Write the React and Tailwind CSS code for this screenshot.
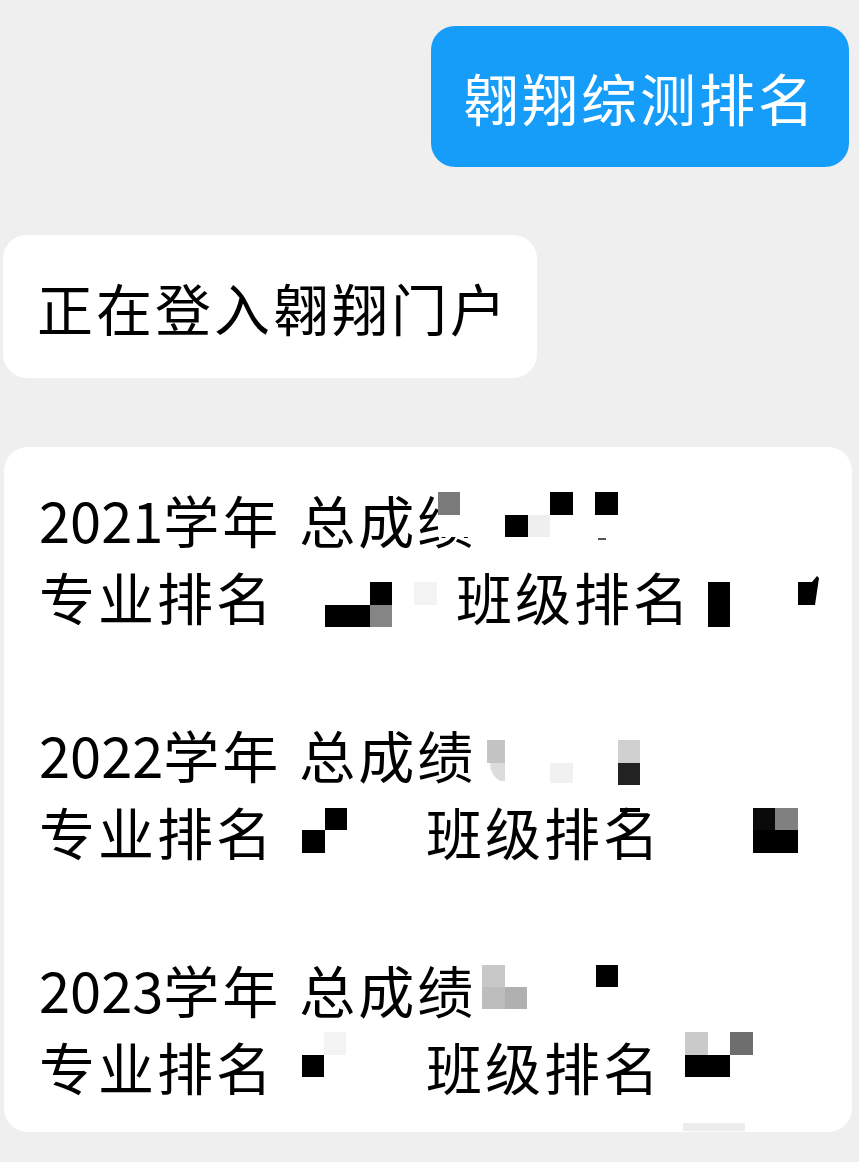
export default function App() {
  const font = { fontFamily: '"Noto Sans CJK SC", "Noto Sans", sans-serif' };
  const Year = ({ y }) => (
    <div className="flex items-center h-[77px] leading-[77px]">
      <span className="tracking-normal">{y}</span>
      <span className="tracking-[3px]">学年</span>
      <span className="tracking-[3px] ml-[18px]">总成绩</span>
    </div>
  );
  const Rank = ({ gap }) => (
    <div className="flex items-center h-[77px] leading-[77px]">
      <span className="tracking-[3px]">专业排名</span>
      <span className={`tracking-[3px] ${gap}`}>班级排名</span>
    </div>
  );
  return (
    <div
      className="relative w-[859px] h-[1162px] bg-[#efefef] flex flex-col overflow-hidden text-black"
      style={font}
    >
      <div className="self-end mr-[10px] mt-[26px] w-[418px] h-[141px] rounded-[24px] bg-[#169cf9] flex items-center justify-center text-white text-[56px] tracking-[3px]">
        翱翔综测排名
      </div>
      <div className="ml-[3px] mt-[68px] w-[534px] h-[143px] rounded-[24px] bg-white flex items-center pl-[34px] text-[56px] tracking-[3px]">
        正在登入翱翔门户
      </div>
      <div className="relative ml-[4px] mt-[69px] w-[848px] rounded-[24px] bg-white pt-[33px] pb-[28px] pl-[35px] text-[56px] flex flex-col">
        <div className="flex flex-col">
          <Year y="2021" />
          <Rank gap="ml-[181px]" />
        </div>
        <div className="flex flex-col mt-[81px]">
          <Year y="2022" />
          <Rank gap="ml-[151px]" />
        </div>
        <div className="flex flex-col mt-[81px]">
          <Year y="2023" />
          <Rank gap="ml-[151px]" />
        </div>
      </div>
      <svg
        className="absolute left-0 top-0 pointer-events-none"
        width="859"
        height="1162"
        viewBox="0 0 859 1162"
      >
        {/* 2021 score */}
        <rect x="438" y="492" width="50" height="45" fill="#ffffff" />
        <rect x="438" y="492" width="22" height="23" fill="#7a7a7a" />
        <rect x="505" y="515" width="23" height="22" fill="#000" />
        <rect x="528" y="515" width="22" height="22" fill="#efefef" />
        <rect x="550" y="492" width="23" height="23" fill="#000" />
        <rect x="595" y="492" width="23" height="23" fill="#000" />
        <rect x="598" y="538" width="8" height="2" fill="#555" />
        {/* 2021 ranks */}
        <rect x="325" y="605" width="45" height="22" fill="#000" />
        <rect x="370" y="582" width="22" height="23" fill="#000" />
        <rect x="370" y="605" width="22" height="22" fill="#858585" />
        <rect x="414" y="582" width="23" height="23" fill="#f3f3f3" />
        <rect x="708" y="582" width="22" height="45" fill="#000" />
        <polygon points="798,582 812,582 817,576 819,578 815,605 798,605" fill="#000" />
        {/* 2022 score */}
        <rect x="487" y="740" width="18" height="23" fill="#c4c4c4" />
        <path d="M490 763 H505 V781 H500 Q490 775 490 763 Z" fill="#dcdcdc" />
        <rect x="550" y="763" width="23" height="20" fill="#f1f1f1" />
        <rect x="618" y="740" width="22" height="23" fill="#d0d0d0" />
        <rect x="618" y="763" width="22" height="22" fill="#222" />
        <rect x="620" y="808" width="20" height="4" fill="#000" />
        {/* 2022 ranks */}
        <rect x="325" y="808" width="22" height="22" fill="#000" />
        <rect x="302" y="830" width="23" height="23" fill="#000" />
        <rect x="753" y="808" width="22" height="22" fill="#0a0a0a" />
        <rect x="775" y="808" width="23" height="22" fill="#808080" />
        <rect x="753" y="830" width="45" height="23" fill="#000" />
        {/* 2023 score */}
        <rect x="482" y="965" width="23" height="22" fill="#c8c8c8" />
        <rect x="482" y="987" width="23" height="22" fill="#bdbdbd" />
        <rect x="505" y="987" width="22" height="22" fill="#b0b0b0" />
        <rect x="596" y="965" width="22" height="22" fill="#000" />
        {/* 2023 ranks */}
        <rect x="302" y="1055" width="22" height="22" fill="#000" />
        <rect x="324" y="1032" width="22" height="23" fill="#f3f3f3" />
        <rect x="685" y="1032" width="23" height="23" fill="#cacaca" />
        <rect x="730" y="1032" width="23" height="23" fill="#6e6e6e" />
        <rect x="685" y="1055" width="45" height="22" fill="#000" />
        <rect x="683" y="1123" width="62" height="8" fill="#ececec" />
      </svg>
    </div>
  );
}
